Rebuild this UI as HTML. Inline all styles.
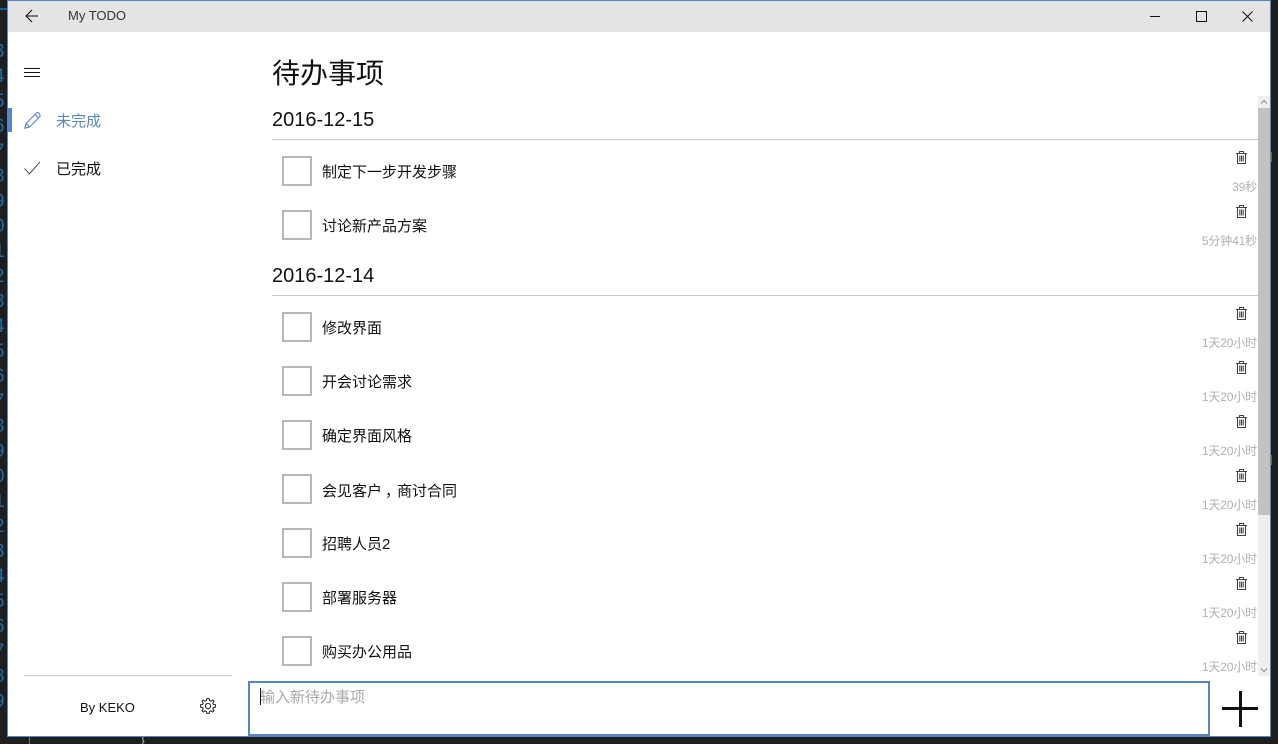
<!DOCTYPE html>
<html lang="zh"><head><meta charset="utf-8"><title>My TODO</title>
<style>
html,body{margin:0;padding:0;width:1278px;height:744px;overflow:hidden;background:#1e1e1e}
body{position:relative;font-family:"Liberation Sans","Noto Sans CJK SC",sans-serif;color:#111}
.a{position:absolute;white-space:nowrap}
.win{position:absolute;left:7px;top:0;width:1262px;height:735px;border:1px solid #5a86c0;background:#fff;overflow:hidden}
.t{font-size:15px;line-height:20px;left:322px}
.cb{position:absolute;left:282px;width:26px;height:26px;border:2px solid #b8b8b8}
.tm{font-size:12px;line-height:16px;color:#b0b0b0;right:21px;letter-spacing:-.15px}
.dg{position:absolute;left:-7px;color:#1f6a9e;font:20px "Liberation Mono",monospace;line-height:25px}
.hr{position:absolute;height:1px;background:#cacaca}
.d{font-size:20px;line-height:26px;left:272px}
</style></head><body>
<div class="dg" style="top:40px">3<br>4<br>5<br>6<br>7<br>8<br>9<br>0<br>1<br>2<br>3<br>4<br>5<br>6<br>7<br>8<br>9<br>0<br>1<br>2<br>3<br>4<br>5<br>6<br>7<br>8<br>9</div>
<div class="a" style="left:0;top:8px;width:7px;height:2px;background:#0e639c"></div>
<div class="a" style="left:1271px;top:152px;width:5px;height:10px;border-left:1px solid #4a7a3a"></div>
<div class="a" style="left:1271px;top:455px;width:5px;height:10px;border-left:1px solid #4a7a3a"></div>
<div class="a" style="left:29px;top:737px;width:1px;height:7px;background:#777"></div>
<div class="a" style="left:141px;top:737px;color:#ccc;font-size:11px;line-height:8px">}</div>
<div class="win"></div>
<div class="a" style="left:8px;top:1px;width:1262px;height:31px;background:#e4e4e4"></div>
<svg class="a" style="left:25px;top:9px" width="14" height="14" viewBox="0 0 14 14" fill="none" stroke="#111" stroke-width="1.1"><path d="M1 7H13M7 1L1 7L7 13"/></svg>
<div class="a" style="left:68px;top:7px;font-size:13px;line-height:18px;color:#333">My TODO</div>
<div class="a" style="left:1150px;top:16px;width:10px;height:1px;background:#111"></div>
<div class="a" style="left:1196px;top:11px;width:9px;height:9px;border:1px solid #111"></div>
<svg class="a" style="left:1242px;top:11px" width="11" height="11" viewBox="0 0 11 11" fill="none" stroke="#111" stroke-width="1"><path d="M.5.5L10.5 10.5M10.5.5L.5 10.5"/></svg>

<div class="a" style="left:24px;top:68px;width:16px;height:1px;background:#111;box-shadow:0 4px 0 #111,0 8px 0 #111"></div>
<div class="a" style="left:8px;top:108px;width:4px;height:24px;background:#5a86c0"></div>
<svg class="a" style="left:24px;top:112px" width="17" height="17" viewBox="0 0 17 17" fill="none" stroke="#5a86c0" stroke-width="1.1"><path d="M.8 16.2L2 11.5L12.5 1Q13.7 0 15 1.2T16 4.5L5.5 15ZM2 11.5L5.5 15M11 2.5L14.5 6"/></svg>
<div class="a" style="left:56px;top:112px;font-size:15px;line-height:20px;color:#5a86c0">未完成</div>
<svg class="a" style="left:24px;top:161px" width="17" height="14" viewBox="0 0 17 14" fill="none" stroke="#222" stroke-width=".8"><path d="M.5 7.5L5.5 12.8L16 1"/></svg>
<div class="a" style="left:56px;top:160px;font-size:15px;line-height:20px">已完成</div>
<div class="hr" style="left:24px;top:675px;width:208px"></div>
<div class="a" style="left:80px;top:698px;font-size:13px;line-height:20px">By KEKO</div>
<svg class="a" style="left:200px;top:698px" width="16" height="16" viewBox="0 0 16 16" fill="none" stroke="#222" stroke-width="1"><circle cx="8" cy="8" r="2.6"/><path d="M6.8.6H9.2L9.6 2.6L11 3.2L12.7 2L14 3.3L12.8 5L13.4 6.4L15.4 6.8V9.2L13.4 9.6L12.8 11L14 12.7L12.7 14L11 12.8L9.6 13.4L9.2 15.4H6.8L6.4 13.4L5 12.8L3.3 14L2 12.7L3.2 11L2.6 9.6L.6 9.2V6.8L2.6 6.4L3.2 5L2 3.3L3.3 2L5 3.2L6.4 2.6Z"/></svg>

<div class="a" style="left:272px;top:54px;font-size:28px;line-height:40px">待办事项</div>
<div class="a d" style="top:107px">2016-12-15</div>
<div class="hr" style="left:272px;top:139px;width:986px"></div>
<div class="a d" style="top:263px">2016-12-14</div>
<div class="hr" style="left:272px;top:295px;width:986px"></div>

<div class="cb" style="top:156px"></div><div class="a t" style="top:163px">制定下一步开发步骤</div>
<div class="cb" style="top:210px"></div><div class="a t" style="top:217px">讨论新产品方案</div>
<div class="cb" style="top:312px"></div><div class="a t" style="top:319px">修改界面</div>
<div class="cb" style="top:366px"></div><div class="a t" style="top:373px">开会讨论需求</div>
<div class="cb" style="top:420px"></div><div class="a t" style="top:427px">确定界面风格</div>
<div class="cb" style="top:474px"></div><div class="a t" style="top:481px">会见客户<span style="font-family:'Noto Sans CJK SC',sans-serif;position:relative;left:3px">，</span>商讨合同</div>
<div class="cb" style="top:528px"></div><div class="a t" style="top:535px">招聘人员2</div>
<div class="cb" style="top:582px"></div><div class="a t" style="top:589px">部署服务器</div>
<div class="cb" style="top:636px"></div><div class="a t" style="top:643px">购买办公用品</div>

<svg width="0" height="0" style="position:absolute"><defs><g id="tr" fill="none" stroke="#444" stroke-width="1.1"><path d="M0 2.5H11M3.5 2.5V.5H7.5V2.5M1.5 2.5V12.5H9.5V2.5"/><path d="M3.8 4.5V10.5M5.5 4.5V10.5M7.2 4.5V10.5"/></g></defs></svg>
<svg class="a" style="left:1236px;top:151px" width="11" height="13"><use href="#tr"/></svg>
<svg class="a" style="left:1236px;top:205px" width="11" height="13"><use href="#tr"/></svg>
<svg class="a" style="left:1236px;top:307px" width="11" height="13"><use href="#tr"/></svg>
<svg class="a" style="left:1236px;top:361px" width="11" height="13"><use href="#tr"/></svg>
<svg class="a" style="left:1236px;top:415px" width="11" height="13"><use href="#tr"/></svg>
<svg class="a" style="left:1236px;top:469px" width="11" height="13"><use href="#tr"/></svg>
<svg class="a" style="left:1236px;top:523px" width="11" height="13"><use href="#tr"/></svg>
<svg class="a" style="left:1236px;top:577px" width="11" height="13"><use href="#tr"/></svg>
<svg class="a" style="left:1236px;top:631px" width="11" height="13"><use href="#tr"/></svg>
<div class="a tm" style="top:179px">39秒</div>
<div class="a tm" style="top:233px">5分钟41秒</div>
<div class="a tm" style="top:335px">1天20小时</div>
<div class="a tm" style="top:389px">1天20小时</div>
<div class="a tm" style="top:443px">1天20小时</div>
<div class="a tm" style="top:497px">1天20小时</div>
<div class="a tm" style="top:551px">1天20小时</div>
<div class="a tm" style="top:605px">1天20小时</div>
<div class="a tm" style="top:659px">1天20小时</div>

<div class="a" style="left:1258px;top:96px;width:12px;height:580px;background:#efefef"></div>
<div class="a" style="left:1258px;top:108px;width:12px;height:407px;background:#c2c2c2"></div>
<svg class="a" style="left:1260px;top:99px" width="8" height="6" fill="none" stroke="#888"><path d="M1 4.5L4 1.5L7 4.5"/></svg>
<svg class="a" style="left:1260px;top:667px" width="8" height="6" fill="none" stroke="#888"><path d="M1 1.5L4 4.5L7 1.5"/></svg>

<div class="a" style="left:248px;top:681px;width:958px;height:51px;border:2px solid #5a86c0;background:#fff"></div>
<div class="a" style="left:260px;top:688px;font-size:15px;line-height:20px;color:#a8a8a8">输入新待办事项</div>
<div class="a" style="left:260px;top:688px;width:1px;height:17px;background:#111"></div>
<div class="a" style="left:1222px;top:707px;width:36px;height:3px;background:#111"></div>
<div class="a" style="left:1239px;top:691px;width:3px;height:36px;background:#111"></div>
</body></html>
